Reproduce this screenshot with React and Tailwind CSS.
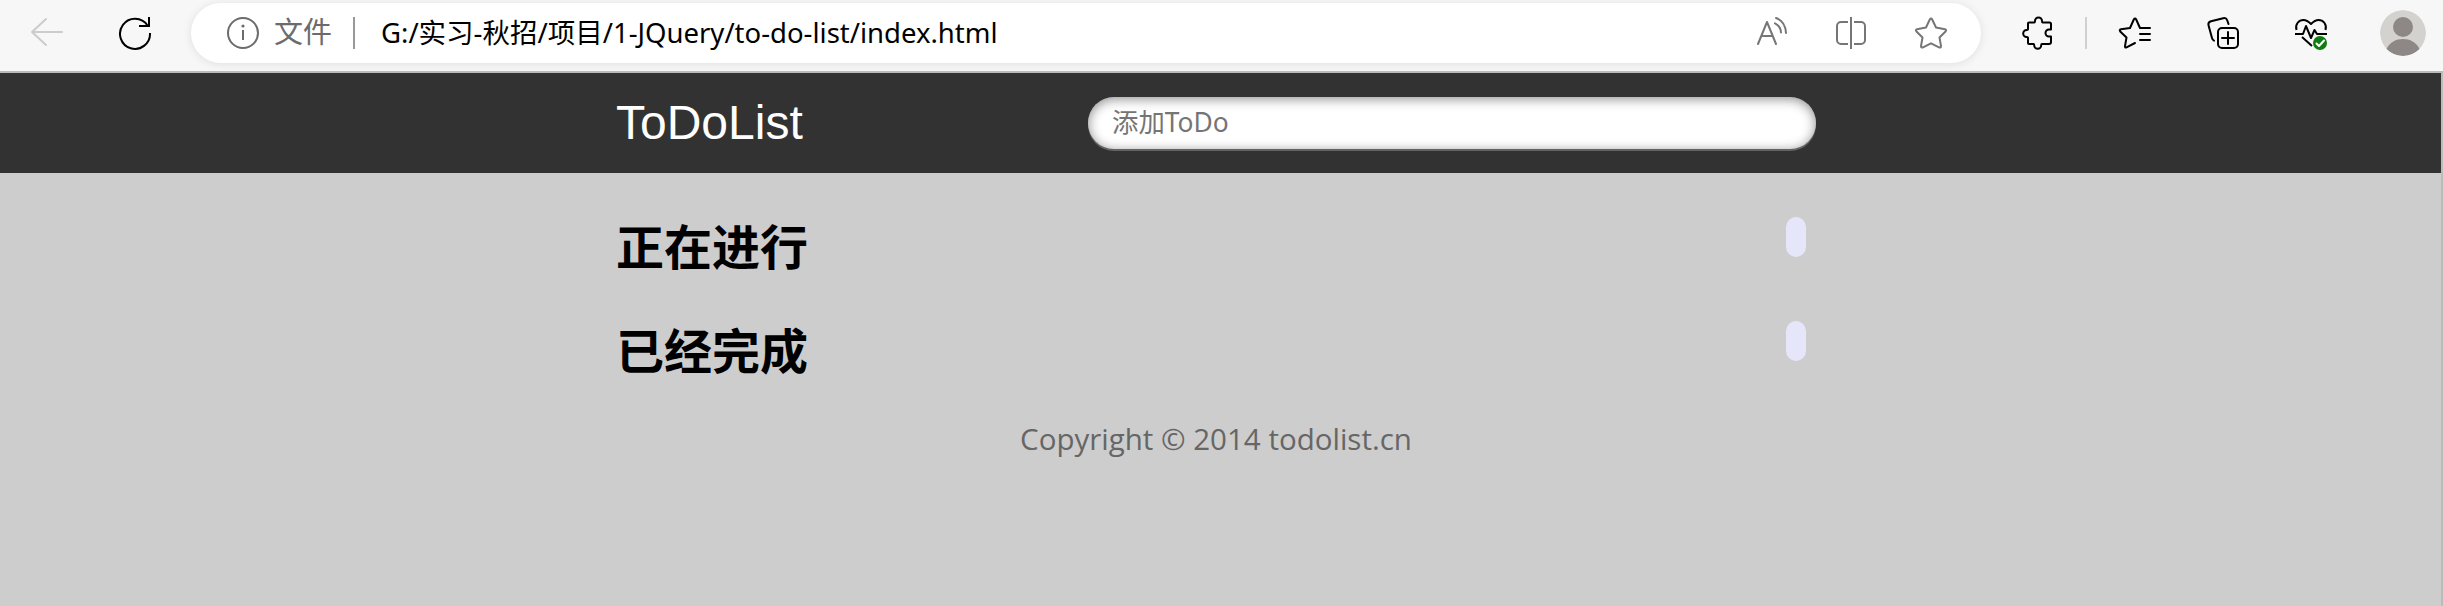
import React from "react";

function Icon({ className = "", children }) {
  return (
    <svg
      className={`h-[34px] w-[34px] shrink-0 ${className}`}
      viewBox="0 0 34 34"
      fill="none"
      stroke="currentColor"
      strokeWidth="2"
      strokeLinecap="round"
      strokeLinejoin="round"
    >
      {children}
    </svg>
  );
}

function AddressBar() {
  return (
    <div className="ml-[39px] flex h-[60px] w-[1790px] shrink-0 items-center rounded-full bg-white pr-[33px] pl-[35px] text-[#6b6b6b] shadow-[0_1px_10px_rgba(0,0,0,0.10)]">
      <Icon>
        <circle cx="17" cy="17" r="15" />
        <path d="M17 14v10" strokeLinecap="butt" />
        <circle cx="17" cy="10" r="1.6" fill="currentColor" stroke="none" />
      </Icon>
      <span className="ml-3.5 w-14 shrink-0 whitespace-nowrap pb-0.5 text-[29px] leading-[56px]">文件</span>
      <span className="ml-[23px] h-8 w-0.5 shrink-0 bg-[#999]" />
      <span className="ml-[26px] whitespace-nowrap text-[27.5px] leading-[56px] text-black">
        G:/实习-秋招/项目/1-JQuery/to-do-list/index.html
      </span>
      <div className="ml-auto flex shrink-0 text-[#767676]">
        <Icon className="mr-[45px]">
          <path d="M3 28 12 6l9 22M6.500 20h11M21 2c6 2 9.700 8 10 15M20 7.300c3.500 1.700 5.700 5 6 9.200" />
        </Icon>
        <Icon className="mr-[46px]">
          <path d="M14 6H7a4 4 0 0 0-4 4v14a4 4 0 0 0 4 4h7M20 6h7a4 4 0 0 1 4 4v14a4 4 0 0 1-4 4h-7" strokeLinecap="butt" />
          <path d="M17 1v32" strokeLinecap="butt" />
        </Icon>
        <Icon>
          <path d="M15.800 3.500Q17 1.500 18.200 3.500L22 11.500 31 13.200Q33 13.800 31.500 15.500L25.500 21.500 27 30.200Q27 32 25 31.300L17 27.300 9 31.300Q7 32 7 30.200L8.500 21.500 2.500 15.500Q1 13.800 3 13.200L12 11.500Z" />
        </Icon>
      </div>
    </div>
  );
}

function Toolbar() {
  return (
    <div className="flex h-[71px] items-center bg-[#f7f7f7] pb-[5px] pl-[30px]">
      <Icon className="text-[#cccccc]">
        <path d="M32 16H2M16 3 2 16l14 13" />
      </Icon>
      <Icon className="ml-[54px] text-black">
        <g strokeLinecap="butt" strokeLinejoin="miter">
          <path d="M32 17A15 15 0 1 1 29.500 9.500" />
          <path d="M31 1v9h-10" />
        </g>
      </Icon>
      <AddressBar />
      <Icon className="ml-[40px] text-black">
        <path d="M8 6.500h5.200c.8 0 .8-.6.8-1.500a3.500 3.500 0 0 1 7 0c0 .9 0 1.500.8 1.500H28.500a1.500 1.500 0 0 1 1.500 1.500v5.500h-2a3.500 3.500 0 0 0 0 7h2V26a2 2 0 0 1-2 2h-7c-.8 0-.8.600-.8 1.300a3.500 3.500 0 0 1-7 0c0-.700 0-1.300-.8-1.300H8a1 1 0 0 1-1-1v-5.200c0-.8-.600-.8-1.300-.8a3.500 3.500 0 0 1 0-7c.700 0 1.300 0 1.300-.8V7.500a1 1 0 0 1 1-1Z" />
      </Icon>
      <span className="ml-[30px] h-8 w-0.5 shrink-0 bg-[#d0d0d0]" />
      <Icon className="ml-[31px] text-black">
        <path d="M17 27 8.500 31.400Q6.800 32 7 30.200L8.500 21.500 2.200 15.500Q1 13.800 3 13.200L12 12 15.800 3.500Q17 1.500 18.200 3.500L22 12H32M22 18h10M22 24h10" />
      </Icon>
      <Icon className="ml-[54px] text-black">
        <path d="M22.500 8 21.200 4.200C20.500 2.200 19 1.800 17.200 2.200L5 5.300C3 6 2 7.400 2.500 9.300L6 22c.4 1.500 1 2.200 2 2.600" />
        <rect x="12" y="12" width="20" height="20" rx="4" />
        <path d="M22 16v12M16 22h12" />
      </Icon>
      <Icon className="ml-[54px] text-black">
        <g strokeLinecap="butt">
          <path d="M2.500 14C.8 8 5 4 9.500 4c3.500 0 5.500 2 7.500 4 2-2 4-4 7.500-4C29 4 33.200 8 31.500 14" />
          <path d="M1 18h8l3-8 5 12 3.500-8 2.500 4h10M8 21l10 9" />
        </g>
        <circle cx="26" cy="27" r="7" fill="#0f7b10" stroke="none" />
        <path d="m22.500 27.500 2.500 2.500 5-5.500" stroke="#fff" />
      </Icon>
      <svg className="ml-[52px] h-[46px] w-[46px] shrink-0 rounded-full" viewBox="0 0 46 46">
        <circle cx="23" cy="23" r="23" fill="#d4d2cf" />
        <circle cx="23" cy="17" r="10" fill="#8d8885" />
        <path d="M6.500 39C10 32 16 29 23 29s13 3 16.500 10Q33 46 23 46T6.500 39Z" fill="#8d8885" />
      </svg>
    </div>
  );
}

function ListHeading({ title }) {
  return (
    <section className="flex h-[104px] items-start justify-between pr-2.5">
      <h2 className="pt-1 text-[48px] leading-[60px] font-bold text-black">{title}</h2>
      <span className="mt-1 h-10 w-5 rounded-[10px] bg-[#e6e6fa]" />
    </section>
  );
}

export default function App() {
  return (
    <div className="flex h-[606px] w-[2443px] flex-col overflow-hidden font-['Noto_Sans','Noto_Sans_CJK_SC',sans-serif]">
      <Toolbar />
      <div className="flex-1 border-t-2 border-r-2 border-[#bbbbbb] bg-[#cdcdcd]">
        <header className="h-[100px] bg-[#323232]">
          <div className="ml-[616px] flex h-full w-[1200px] items-center justify-between">
            <h1 className="font-['Liberation_Sans',sans-serif] text-[48px] leading-[98px] text-white">ToDoList</h1>
            <input
              className="h-[52px] w-[728px] rounded-[26px] bg-white px-6 pb-[3px] text-[26.4px] text-black shadow-[0_2px_0_rgba(255,255,255,0.24),inset_0_2px_12px_rgba(0,0,0,0.45)] outline-none placeholder:text-[#757575]"
              placeholder="添加ToDo"
            />
          </div>
        </header>
        <main className="ml-[616px] w-[1200px] pt-10">
          <ListHeading title="正在进行" />
          <ListHeading title="已经完成" />
        </main>
        <footer className="ml-[616px] w-[1200px] text-center font-['Open_Sans','Noto_Sans',sans-serif] text-[29.5px] leading-[35px] text-[#666]">
          Copyright © 2014 todolist.cn
        </footer>
      </div>
    </div>
  );
}
